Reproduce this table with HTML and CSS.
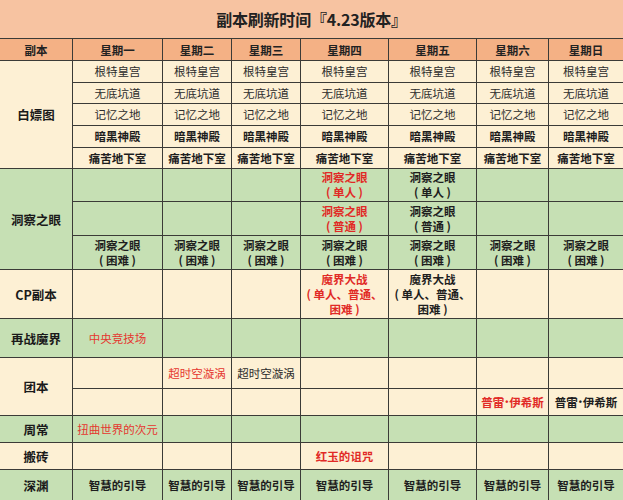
FILE: index.html
```html
<!DOCTYPE html>
<html lang="zh">
<head>
<meta charset="utf-8">
<link rel="stylesheet" href="styles.css">
</head>
<body>
<div class="sheet">
  <div class="title">副本刷新时间『4.23版本』</div>

  <div class="hd">副本</div>
  <div class="hd">星期一</div>
  <div class="hd">星期二</div>
  <div class="hd">星期三</div>
  <div class="hd">星期四</div>
  <div class="hd">星期五</div>
  <div class="hd">星期六</div>
  <div class="hd">星期日</div>

  <div class="label cream span5">白嫖图</div>
  <div class="c cream">根特皇宫</div><div class="c cream">根特皇宫</div><div class="c cream">根特皇宫</div><div class="c cream">根特皇宫</div><div class="c cream">根特皇宫</div><div class="c cream">根特皇宫</div><div class="c cream">根特皇宫</div>
  <div class="c cream">无底坑道</div><div class="c cream">无底坑道</div><div class="c cream">无底坑道</div><div class="c cream">无底坑道</div><div class="c cream">无底坑道</div><div class="c cream">无底坑道</div><div class="c cream">无底坑道</div>
  <div class="c cream">记忆之地</div><div class="c cream">记忆之地</div><div class="c cream">记忆之地</div><div class="c cream">记忆之地</div><div class="c cream">记忆之地</div><div class="c cream">记忆之地</div><div class="c cream">记忆之地</div>
  <div class="c cream b">暗黑神殿</div><div class="c cream b">暗黑神殿</div><div class="c cream b">暗黑神殿</div><div class="c cream b">暗黑神殿</div><div class="c cream b">暗黑神殿</div><div class="c cream b">暗黑神殿</div><div class="c cream b">暗黑神殿</div>
  <div class="c cream b">痛苦地下室</div><div class="c cream b">痛苦地下室</div><div class="c cream b">痛苦地下室</div><div class="c cream b">痛苦地下室</div><div class="c cream b">痛苦地下室</div><div class="c cream b">痛苦地下室</div><div class="c cream b">痛苦地下室</div>

  <div class="label green span3">洞察之眼</div>
  <div class="c green"></div><div class="c green"></div><div class="c green"></div>
  <div class="c green b red">洞察之眼<br>( 单人 )</div><div class="c green b">洞察之眼<br>( 单人 )</div>
  <div class="c green"></div><div class="c green"></div>
  <div class="c green"></div><div class="c green"></div><div class="c green"></div>
  <div class="c green b red">洞察之眼<br>( 普通 )</div><div class="c green b">洞察之眼<br>( 普通 )</div>
  <div class="c green"></div><div class="c green"></div>
  <div class="c green b">洞察之眼<br>( 困难 )</div><div class="c green b">洞察之眼<br>( 困难 )</div><div class="c green b">洞察之眼<br>( 困难 )</div><div class="c green b">洞察之眼<br>( 困难 )</div><div class="c green b">洞察之眼<br>( 困难 )</div><div class="c green b">洞察之眼<br>( 困难 )</div><div class="c green b">洞察之眼<br>( 困难 )</div>

  <div class="label cream">CP副本</div>
  <div class="c cream"></div><div class="c cream"></div><div class="c cream"></div>
  <div class="c cream b red">魔界大战<br>( 单人、普通、<br>困难 )</div><div class="c cream b">魔界大战<br>( 单人、普通、<br>困难 )</div>
  <div class="c cream"></div><div class="c cream"></div>

  <div class="label green">再战魔界</div>
  <div class="c green red">中央竞技场</div>
  <div class="c green"></div><div class="c green"></div><div class="c green"></div><div class="c green"></div><div class="c green"></div><div class="c green"></div>

  <div class="label cream span2">团本</div>
  <div class="c cream"></div><div class="c cream red">超时空漩涡</div><div class="c cream">超时空漩涡</div>
  <div class="c cream"></div><div class="c cream"></div><div class="c cream"></div><div class="c cream"></div>
  <div class="c cream"></div><div class="c cream"></div><div class="c cream"></div><div class="c cream"></div><div class="c cream"></div>
  <div class="c cream b red">普雷<span class="dot">•</span>伊希斯</div><div class="c cream b">普雷<span class="dot">•</span>伊希斯</div>

  <div class="label green">周常</div>
  <div class="c green red">扭曲世界的次元</div>
  <div class="c green"></div><div class="c green"></div><div class="c green"></div><div class="c green"></div><div class="c green"></div><div class="c green"></div>

  <div class="label cream">搬砖</div>
  <div class="c cream"></div><div class="c cream"></div><div class="c cream"></div>
  <div class="c cream b red">红玉的诅咒</div>
  <div class="c cream"></div><div class="c cream"></div><div class="c cream"></div>

  <div class="label green">深渊</div>
  <div class="c green b">智慧的引导</div><div class="c green b">智慧的引导</div><div class="c green b">智慧的引导</div><div class="c green b">智慧的引导</div><div class="c green b">智慧的引导</div><div class="c green b">智慧的引导</div><div class="c green b">智慧的引导</div>
</div>
</body>
</html>
```

FILE: styles.css
```css
html, body {
  margin: 0;
  padding: 0;
  background: #ffffff;
}

.sheet {
  width: 623px;
  height: 500px;
  display: grid;
  grid-template-columns: 72px 89px 68px 68px 87px 87px 71px 74px;
  grid-template-rows: 38px 21px 21px 20px 21px 21px 20px 32px 33px 33px 48px 38px 30px 26px 26px 26px 30px;
  gap: 1px;
  background: #3b3b37;
  font-family: "Noto Sans CJK SC", "Noto Sans", sans-serif;
  color: #1e1e1e;
  overflow: hidden;
}

.title {
  grid-column: 1 / -1;
  background: #f7c3a1;
  display: flex;
  align-items: center;
  justify-content: center;
  font-size: 16px;
  font-weight: 700;
  color: #222;
  letter-spacing: -0.2px;
}

.hd {
  background: #f4b185;
  display: flex;
  align-items: center;
  justify-content: center;
  font-size: 11.5px;
  font-weight: 700;
  color: #222;
}

.label {
  display: flex;
  align-items: center;
  justify-content: center;
  font-size: 12.5px;
  font-weight: 700;
  color: #1a1a1a;
}

.span5 { grid-row: span 5; }
.span3 { grid-row: span 3; }
.span2 { grid-row: span 2; }

.c {
  display: flex;
  align-items: center;
  justify-content: center;
  text-align: center;
  font-size: 11.5px;
  line-height: 15px;
  color: #2b2b2b;
  white-space: pre-line;
}

.b { font-weight: 700; color: #1e1e1e; }

.dot {
  font-family: "Liberation Sans", sans-serif;
  font-size: 9px;
  margin: 0 1px;
}

.cream { background: #fdf0d4; }
.green { background: #c6e0b4; }

.red { color: #e5362f; }
.b.red { color: #e12a26; }
```
